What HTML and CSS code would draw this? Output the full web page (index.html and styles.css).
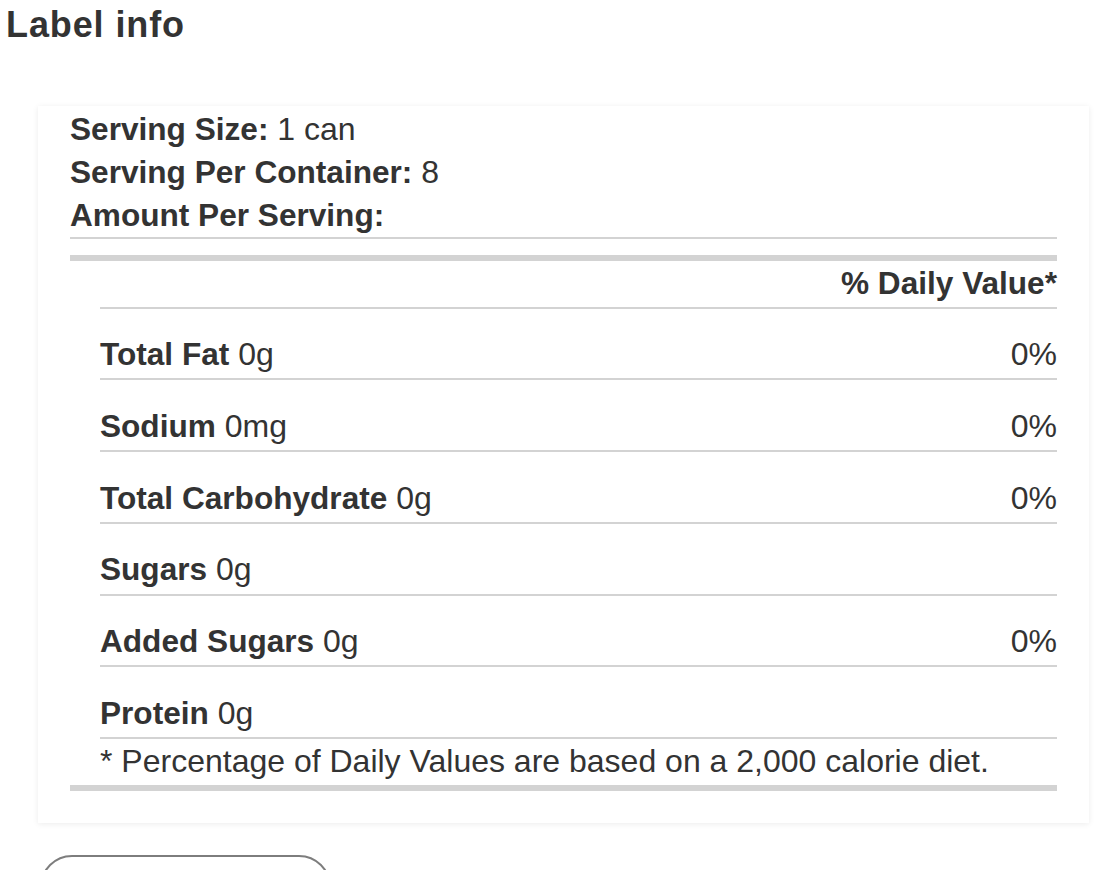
FILE: index.html
```html
<!DOCTYPE html>
<html lang="en">
<head>
<meta charset="utf-8">
<title>Label info</title>
<link rel="stylesheet" href="styles.css">
</head>
<body>
<h1 class="title">Label info</h1>
<section class="card">
  <div class="facts">
    <div class="fact"><strong>Serving Size:</strong> 1 can</div>
    <div class="fact"><strong>Serving Per Container:</strong> 8</div>
    <div class="fact"><strong>Amount Per Serving:</strong></div>
  </div>
  <div class="bar"></div>
  <div class="nutrients">
    <div class="dv-head"><strong>% Daily Value*</strong></div>
    <div class="row"><span><strong>Total Fat</strong> 0g</span><span>0%</span></div>
    <div class="row"><span><strong>Sodium</strong> 0mg</span><span>0%</span></div>
    <div class="row"><span><strong>Total Carbohydrate</strong> 0g</span><span>0%</span></div>
    <div class="row"><span><strong>Sugars</strong> 0g</span><span></span></div>
    <div class="row"><span><strong>Added Sugars</strong> 0g</span><span>0%</span></div>
    <div class="row"><span><strong>Protein</strong> 0g</span><span></span></div>
    <div class="footnote">* Percentage of Daily Values are based on a 2,000 calorie diet.</div>
  </div>
  <div class="bar"></div>
</section>
<button class="more" type="button" aria-label="More"></button>
</body>
</html>
```
FILE: styles.css
```css
html, body {
  margin: 0;
  padding: 0;
  background: #ffffff;
}
body {
  font-family: "Liberation Sans", Arial, Helvetica, sans-serif;
  color: #333333;
  font-size: 32px;
}
.title {
  margin: 0;
  padding: 4px 0 0 6px;
  font-size: 36px;
  line-height: 42px;
  letter-spacing: 0.9px;
  font-weight: bold;
  color: #333333;
}
.card {
  margin: 60px 19px 0 38px;
  padding: 1.5px 32px 32px;
  background: #ffffff;
  box-shadow: 0 1px 6px rgba(0, 0, 0, 0.08);
}
strong {
  font-weight: bold;
  font-size: 31.6px;
  line-height: 1;
}
.facts {
  border-bottom: 2px solid #d3d3d3;
}
.fact {
  line-height: 43px;
}
.bar {
  height: 6px;
  background: #d3d3d3;
}
.facts + .bar {
  margin-top: 16px;
}
.nutrients {
  margin-left: 30px;
}
.dv-head {
  text-align: right;
  line-height: 40px;
  padding: 2.5px 0 3.5px;
  border-bottom: 2px solid #d3d3d3;
}
.row {
  display: flex;
  justify-content: space-between;
  line-height: 40px;
  padding: 25.6px 0 4.2px;
  border-bottom: 2px solid #d3d3d3;
}
.footnote {
  line-height: 40px;
  padding: 1.9px 0 4.1px;
}
.more {
  display: block;
  margin: 32px 0 0 40px;
  width: 291px;
  height: 64px;
  border: 2px solid #7d7d7d;
  border-radius: 32px;
  background: #ffffff;
  padding: 0;
}
```
